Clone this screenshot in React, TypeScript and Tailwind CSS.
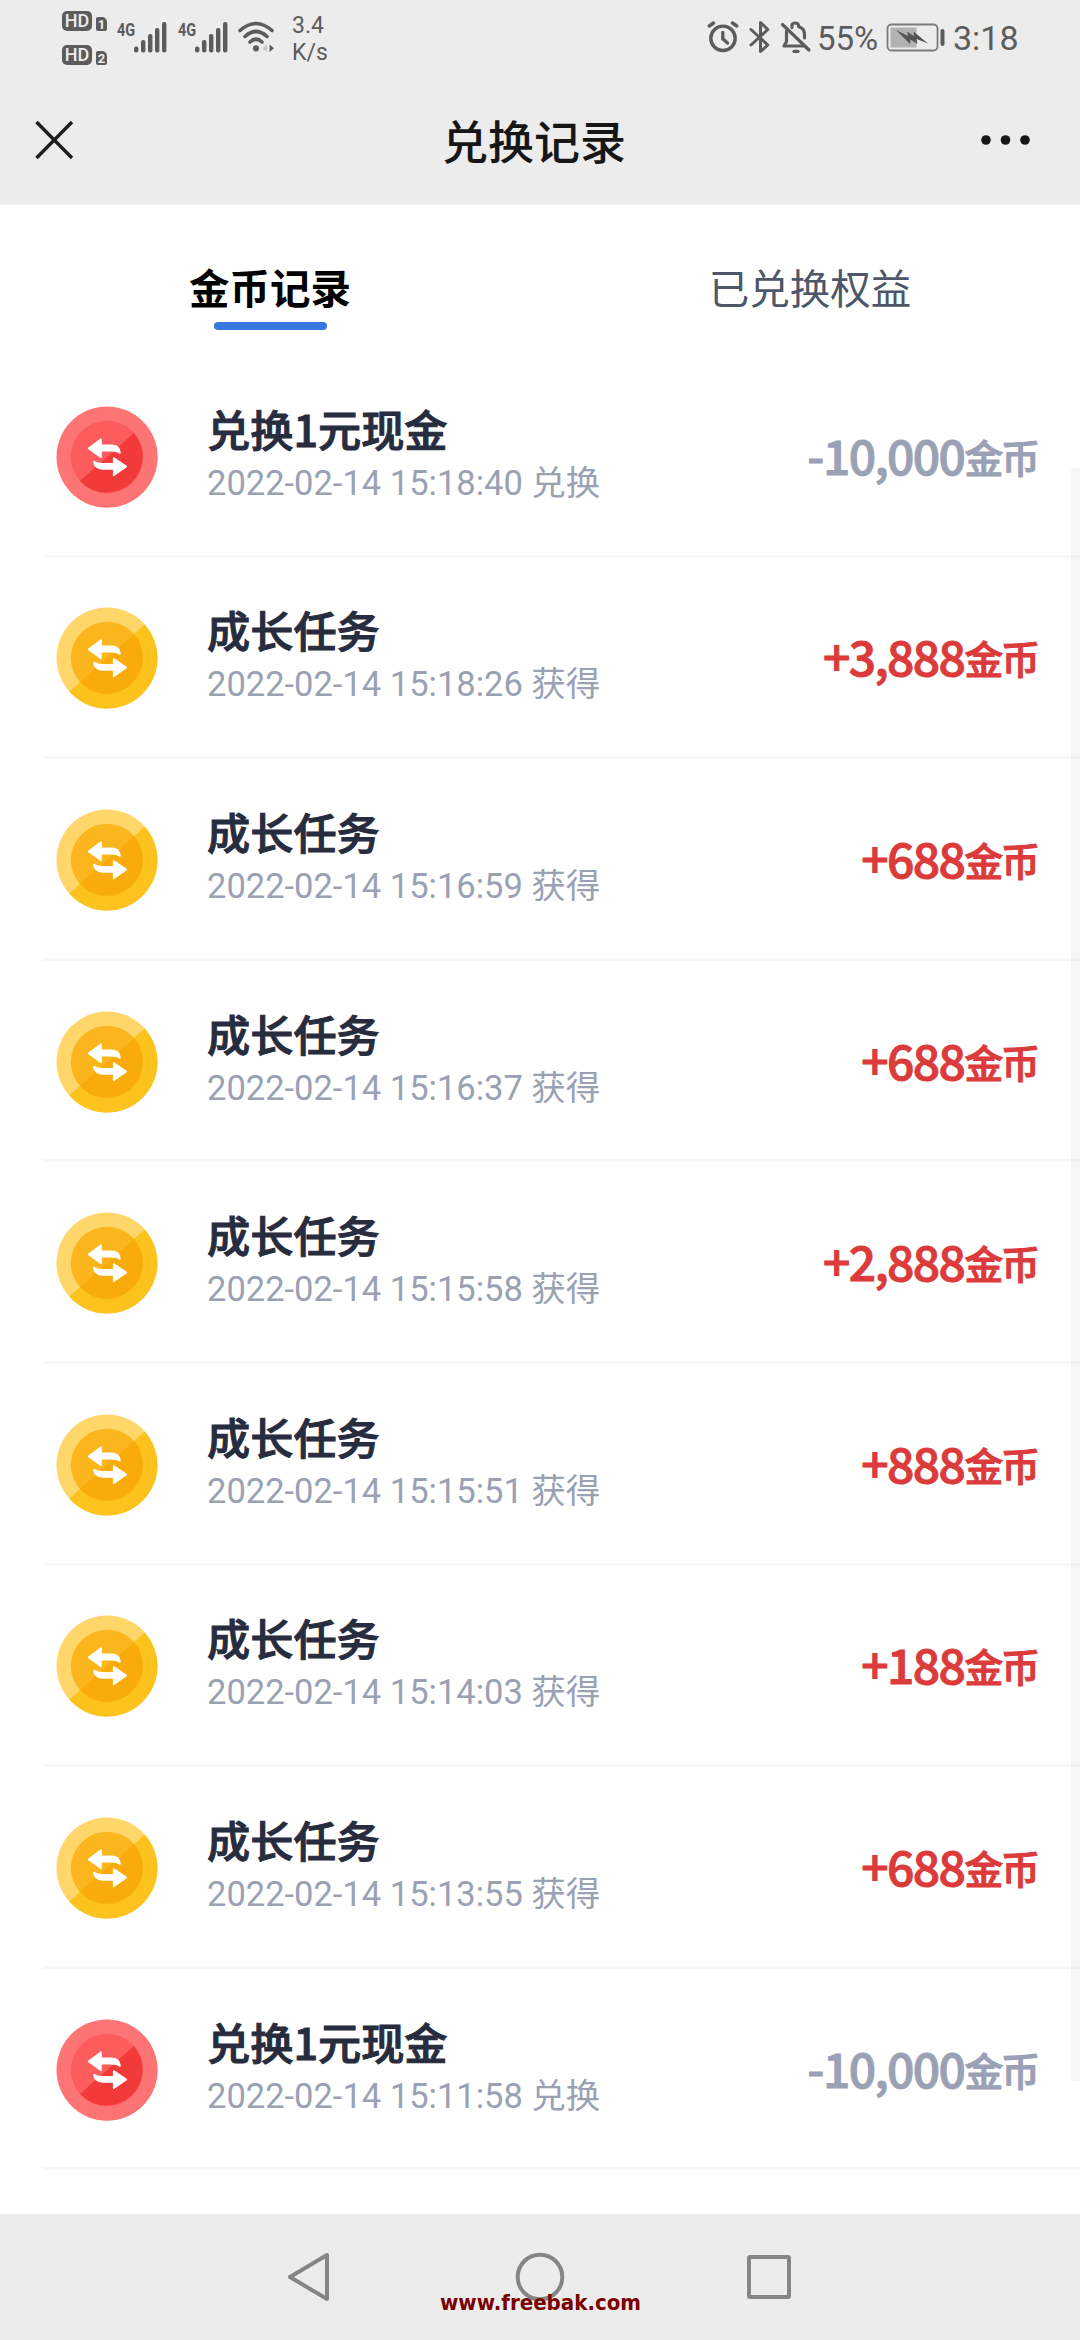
import React from "react";

type RecordItem = { title: string; time: string; amount: string; spend?: boolean };

const records: RecordItem[] = [
  { title: "兑换1元现金", time: "2022-02-14 15:18:40 兑换", amount: "-10,000", spend: true },
  { title: "成长任务", time: "2022-02-14 15:18:26 获得", amount: "+3,888" },
  { title: "成长任务", time: "2022-02-14 15:16:59 获得", amount: "+688" },
  { title: "成长任务", time: "2022-02-14 15:16:37 获得", amount: "+688" },
  { title: "成长任务", time: "2022-02-14 15:15:58 获得", amount: "+2,888" },
  { title: "成长任务", time: "2022-02-14 15:15:51 获得", amount: "+888" },
  { title: "成长任务", time: "2022-02-14 15:14:03 获得", amount: "+188" },
  { title: "成长任务", time: "2022-02-14 15:13:55 获得", amount: "+688" },
  { title: "兑换1元现金", time: "2022-02-14 15:11:58 兑换", amount: "-10,000", spend: true },
];

function HdBadge({ n }: { n: string }) {
  return (
    <div className="flex h-5 items-end gap-1">
      <span className="flex h-5 w-[30px] items-center justify-center rounded-[5px] bg-[#5c5c5c] font-['Roboto',sans-serif] text-[18px] font-medium leading-none text-[#ececec]">HD</span>
      <span className="flex h-[14px] w-[11px] items-center justify-center rounded-[2px] rounded-tr-[5px] bg-[#5c5c5c] font-['Roboto',sans-serif] text-[13px] font-bold leading-none text-[#ececec]">{n}</span>
    </div>
  );
}

function Signal() {
  return (
    <div className="flex h-[31px] w-[50px] items-start">
      <span className="w-[17px] origin-left scale-x-[0.76] font-['Roboto',sans-serif] text-[19px] font-bold leading-[15px] text-[#5c5c5c]">4G</span>
      <svg className="h-[31px] w-[33px] shrink-0" viewBox="0 0 33 31" fill="#5c5c5c">
        <rect x="0" y="24.5" width="4.4" height="6" rx="2" />
        <rect x="7" y="18" width="4.4" height="12.5" rx="2" />
        <rect x="14" y="12" width="4.4" height="18.5" rx="2" />
        <rect x="21" y="6" width="4.4" height="24.5" rx="2" />
        <rect x="28" y="0" width="4.4" height="30.5" rx="2" />
      </svg>
    </div>
  );
}

function StatusBar() {
  return (
    <div className="flex h-[76px] items-start justify-between pl-[62px] pr-[61px] text-[#5c5c5c]">
      <div className="flex">
        <div className="flex flex-col gap-[14px] pt-[11px]">
          <HdBadge n="1" />
          <HdBadge n="2" />
        </div>
        <div className="ml-[10px] flex gap-[11px] pt-[22px]">
          <Signal />
          <Signal />
        </div>
        <svg className="ml-[10px] mt-[21px] h-8 w-[38px]" viewBox="0 0 38 32" fill="none" stroke="#5c5c5c" strokeWidth="3.6" strokeLinecap="round">
          <path d="M2 9.5 Q18 -4.5 34 9.5" />
          <path d="M7 15.5 Q18 5.5 29 15.5" />
          <path d="M12 21 Q18 15.5 24 21" />
          <circle cx="18" cy="27.3" r="3.1" fill="#5c5c5c" stroke="none" />
          <path d="M29 23.5 L24.5 27.3 L29 31 Z" fill="#c4c4c4" stroke="none" />
          <path d="M31.500 23.500 L36 27.300 L31.500 31 Z" fill="#5c5c5c" stroke="none" />
        </svg>
        <div className="ml-[16px] pt-[12px] font-['Roboto',sans-serif] text-[23px] leading-[27px]">
          <div>3.4</div>
          <div>K/s</div>
        </div>
      </div>
      <div className="flex font-['Roboto',sans-serif] text-[34px] leading-[40px]">
        <svg className="mt-[20px] h-[34px] w-[32px]" viewBox="0 0 32 34" fill="none" stroke="#5c5c5c" strokeWidth="3.4" strokeLinecap="round">
          <circle cx="16" cy="18.300" r="12.200" />
          <path d="M15.800 12.500 V18.800 L20.500 23" />
          <path d="M2.300 6 L6.500 3" />
          <path d="M25.500 3 L29.700 6" />
        </svg>
        <svg className="ml-[10px] mt-[20px] h-[34px] w-[22px]" viewBox="0 0 22 34" fill="none" stroke="#5c5c5c" strokeWidth="3" strokeLinejoin="round" strokeLinecap="round">
          <path d="M2 9.500 L18.800 25 L11.500 31.500 V2.500 L18.800 9.500 L2 25" />
        </svg>
        <svg className="ml-[9px] mt-[20px] h-[34px] w-[32px]" viewBox="0 0 32 34" fill="none" stroke="#5c5c5c" strokeWidth="3.200" strokeLinecap="round" strokeLinejoin="round">
          <path d="M2.500 4.500 L29 30" />
          <path d="M6.500 11 V21.500 L4 26 H23" />
          <path d="M12 7.500 Q11 3 15 3 Q19 3 18.500 6.500 Q24.500 8.500 24.500 14 V18" />
          <path d="M14 31.300 H18" />
        </svg>
        <span className="ml-[5px] mt-[18px] w-[62px] origin-left scale-x-[0.97]">55%</span>
        <svg className="ml-[7px] mt-[23px] h-[29px] w-[60px]" viewBox="0 0 60 29">
          <rect x="1.500" y="1.500" width="50" height="26" rx="4" fill="none" stroke="#7b7b7b" strokeWidth="1.800" />
          <rect x="4.500" y="4.500" width="26" height="20" fill="#b2b2b2" />
          <path d="M10 7 L22 13 L21 8.500 L28 13 L27.500 8.500 L42 20.500 L30.500 16 L31.500 21 L24.500 16.500 L24 21 Z" fill="#555" />
          <rect x="54.500" y="6" width="4" height="17" rx="2" fill="#5c5c5c" />
        </svg>
        <span className="ml-[7px] mt-[18px] w-[66px]">3:18</span>
      </div>
    </div>
  );
}

function Coin({ red }: { red?: boolean }) {
  const c = red
    ? { a: "#fd7474", b: "#fd7474", c: "#fd5c5c", d: "#f23a3a" }
    : { a: "#fed669", b: "#fcc31f", c: "#fbb61d", d: "#f9ab0c" };
  return (
    <svg className="h-[102px] w-[102px] shrink-0" viewBox="0 0 102 102">
      <circle cx="51" cy="51" r="50.500" fill={c.a} />
      <path d="M88.700 17.400 A50.500 50.500 0 0 1 13.300 84.600 Z" fill={c.b} />
      <circle cx="51" cy="51" r="36.200" fill={c.c} />
      <path d="M78 26.900 A36.200 36.200 0 0 1 24 75.100 Z" fill={c.d} />
      <g fill="#fff" stroke="#fff" strokeWidth="1.600" strokeLinejoin="round">
        <path d="M32.500 42.300 L45 33.200 V39.300 H55 Q64 39.500 64 47 Q61 44.700 55 44.700 H45 V51.300 Z" />
        <path d="M70.200 60.500 L57.700 69.300 V63 H46.500 Q38.500 62.500 38 55.800 Q42 57.800 46.500 57.800 H57.700 V52 Z" />
      </g>
    </svg>
  );
}

function Row({ r }: { r: RecordItem }) {
  return (
    <li className="ml-[43px] flex h-[201.6px] items-center border-b-[3px] border-[#f8f8f8] pl-[13px] pr-[42px] pt-[3px]">
      <Coin red={r.spend} />
      <div className="ml-[49px] flex-1 pb-[3px]">
        <div className="text-[43.2px] font-medium leading-[50px] text-[#272c3f] [-webkit-text-stroke:1px_#272c3f]">{r.title}</div>
        <div className="mt-[5px] font-['Roboto','Noto_Sans_CJK_SC',sans-serif] text-[34.5px] leading-[50px] text-[#9aa1b3]">{r.time}</div>
      </div>
      <div className={r.spend ? "flex items-baseline pb-[2px] font-medium text-[#9aa1b5] [-webkit-text-stroke:1px_#9aa1b5]" : "flex items-baseline pb-[2px] font-medium text-[#dc3b3b] [-webkit-text-stroke:1px_#dc3b3b]"}>
        <span className="text-[48px] leading-[60px] tracking-[-1.6px]">{r.amount}</span>
        <span className="pb-[2px] text-[38.8px] leading-[56px] tracking-[-2px] -translate-y-[2px]">金币</span>
      </div>
    </li>
  );
}

export default function App() {
  return (
    <div className="relative flex h-[2340px] w-[1080px] flex-col overflow-hidden bg-white font-['Noto_Sans_CJK_SC',sans-serif]">
      <header className="h-[205px] bg-[#ececec]">
        <StatusBar />
        <div className="flex h-[129px] items-center justify-between pb-[2px] pl-[34px] pr-[48px]">
          <svg className="h-[40px] w-[54px]" viewBox="0 0 54 40" stroke="#1c1c1c" strokeWidth="3.400">
            <path d="M2.500 2 L38 38 M38 2 L2.500 38" />
          </svg>
          <h1 className="pb-[2px] text-[46px] font-medium leading-[60px] text-[#161616]">兑换记录</h1>
          <svg className="h-[12px] w-[52px]" viewBox="0 0 52 12" fill="#161616">
            <circle cx="6" cy="6" r="4.800" />
            <circle cx="25.500" cy="6" r="4.800" />
            <circle cx="45" cy="6" r="4.800" />
          </svg>
        </div>
      </header>
      <nav className="grid h-[151px] grid-cols-2 pt-[55px] text-center text-[40.5px] leading-[54px]">
        <div className="flex flex-col items-center font-bold text-black">
          金币记录
          <span className="mt-[8px] h-2 w-[113px] rounded-[4px] bg-[#3478e0]" />
        </div>
        <div className="text-[#4e5669]">已兑换权益</div>
      </nav>
      <ul className="flex-1">
        {records.map((r) => (
          <Row key={r.time} r={r} />
        ))}
      </ul>
      <div className="absolute right-0 top-[468px] h-[1613px] w-[9px] bg-black/[0.035]" />
      <footer className="relative flex h-[126px] shrink-0 items-start justify-between bg-[#ececec] pl-[286px] pr-[287px] pt-[37px]">
        <svg className="h-[52px] w-[46px]" viewBox="0 0 46 52" fill="none" stroke="#858585" strokeWidth="4" strokeLinejoin="round">
          <path d="M4 26 L41 4 V48 Z" />
        </svg>
        <svg className="h-[52px] w-[52px]" viewBox="0 0 52 52" fill="none" stroke="#858585" strokeWidth="4">
          <circle cx="26" cy="26" r="22.300" />
        </svg>
        <svg className="h-[52px] w-[46px]" viewBox="0 0 46 52" fill="none" stroke="#858585" strokeWidth="4" strokeLinejoin="round">
          <rect x="2" y="6" width="40" height="40" rx="1" />
        </svg>
        <span className="absolute left-[440px] top-[77px] origin-left scale-x-[0.945] whitespace-nowrap font-['DejaVu_Sans',sans-serif] text-[21px] font-bold leading-[24px] text-[#7a0000]">www.freebak.com</span>
      </footer>
    </div>
  );
}
